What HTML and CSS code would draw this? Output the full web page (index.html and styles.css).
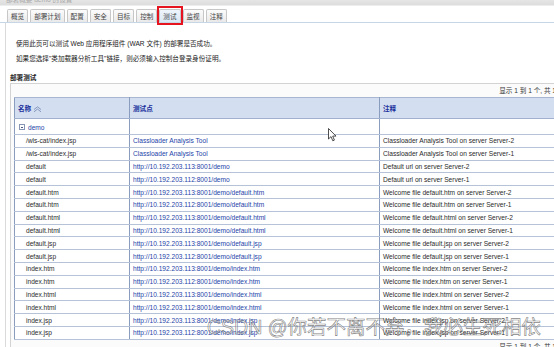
FILE: index.html
```html
<!DOCTYPE html>
<html lang="zh-CN">
  <head>
    <meta charset="UTF-8" />
    <title>部署测试</title>
    <link rel="stylesheet" href="styles.css">
  </head>
  <body>
    <div class="topbar"><span>部署概要 demo 的设置</span></div>
    <div class="tabs">
      <span class="tab">概览</span>
      <span class="tab">部署计划</span>
      <span class="tab">配置</span>
      <span class="tab">安全</span>
      <span class="tab">目标</span>
      <span class="tab">控制</span>
      <span class="tab active">测试</span>
      <span class="tab">监视</span>
      <span class="tab">注释</span>
    </div>
    <div class="page">
      <p class="intro">使用此页可以测试 Web 应用程序组件 (WAR 文件) 的部署是否成功。</p>
      <p class="intro">如果您选择"类加载器分析工具"链接，则必须输入控制台登录身份证明。</p>
      <h3 class="section-title">部署测试</h3>
      <div class="panel">
        <div class="pager">显示 1 到 1 个, 共 1</div>
        <table class="grid">
          <colgroup>
            <col class="c-name" />
            <col class="c-point" />
            <col class="c-note" />
          </colgroup>
          <thead>
            <tr>
              <th>名称 <svg class="sort" width="9" height="6" viewBox="0 0 9 6"><path d="M1 3.5 L4.5 0.8 L8 3.5 M1 5.8 L4.5 3.1 L8 5.8" fill="none" stroke="#7d8fb8" stroke-width="0.9"/></svg></th>
              <th>测试点</th>
              <th>注释</th>
            </tr>
          </thead>
          <tbody>
            <tr class="group">
              <td><span class="toggle"></span><a>demo</a></td>
              <td></td>
              <td></td>
            </tr>
            <tr><td class="name">/wls-cat/index.jsp</td><td><a>Classloader Analysis Tool</a></td><td>Classloader Analysis Tool on server Server-2</td></tr>
            <tr><td class="name">/wls-cat/index.jsp</td><td><a>Classloader Analysis Tool</a></td><td>Classloader Analysis Tool on server Server-1</td></tr>
            <tr><td class="name">default</td><td><a>http://10.192.203.113:8001/demo</a></td><td>Default url on server Server-2</td></tr>
            <tr><td class="name">default</td><td><a>http://10.192.203.112:8001/demo</a></td><td>Default url on server Server-1</td></tr>
            <tr><td class="name">default.htm</td><td><a>http://10.192.203.113:8001/demo/default.htm</a></td><td>Welcome file default.htm on server Server-2</td></tr>
            <tr><td class="name">default.htm</td><td><a>http://10.192.203.112:8001/demo/default.htm</a></td><td>Welcome file default.htm on server Server-1</td></tr>
            <tr><td class="name">default.html</td><td><a>http://10.192.203.113:8001/demo/default.html</a></td><td>Welcome file default.html on server Server-2</td></tr>
            <tr><td class="name">default.html</td><td><a>http://10.192.203.112:8001/demo/default.html</a></td><td>Welcome file default.html on server Server-1</td></tr>
            <tr><td class="name">default.jsp</td><td><a>http://10.192.203.113:8001/demo/default.jsp</a></td><td>Welcome file default.jsp on server Server-2</td></tr>
            <tr><td class="name">default.jsp</td><td><a>http://10.192.203.112:8001/demo/default.jsp</a></td><td>Welcome file default.jsp on server Server-1</td></tr>
            <tr><td class="name">index.htm</td><td><a>http://10.192.203.113:8001/demo/index.htm</a></td><td>Welcome file index.htm on server Server-2</td></tr>
            <tr><td class="name">index.htm</td><td><a>http://10.192.203.112:8001/demo/index.htm</a></td><td>Welcome file index.htm on server Server-1</td></tr>
            <tr><td class="name">index.html</td><td><a>http://10.192.203.113:8001/demo/index.html</a></td><td>Welcome file index.html on server Server-2</td></tr>
            <tr><td class="name">index.html</td><td><a>http://10.192.203.112:8001/demo/index.html</a></td><td>Welcome file index.html on server Server-1</td></tr>
            <tr><td class="name">index.jsp</td><td><a>http://10.192.203.113:8001/demo/index.jsp</a></td><td>Welcome file index.jsp on server Server-2</td></tr>
            <tr><td class="name">index.jsp</td><td><a>http://10.192.203.112:8001/demo/index.jsp</a></td><td>Welcome file index.jsp on server Server-1</td></tr>
          </tbody>
        </table>
        <div class="pager">显示 1 到 1 个, 共 1</div>
      </div>
    </div>
    <div class="watermark">CSDN @你若不离不弃，我必生死相依</div>
    <svg class="cursor" width="9" height="14" viewBox="0 0 9 14">
      <path d="M0.5 0.5 L0.5 11 L3 8.6 L4.8 12.8 L6.4 12.1 L4.7 8.1 L8 8.1 Z" fill="#fff" stroke="#222" stroke-width="0.8" stroke-linejoin="round"/>
    </svg>
  </body>
</html>
```
FILE: styles.css
```css
* {
  padding: 0;
  margin: 0;
  box-sizing: border-box;
}
html {
  overflow: hidden;
}
body {
  width: 620px;
  height: 347px;
  position: relative;
  overflow: hidden;
  background: #fff;
  color: #333;
  font-family: 'Liberation Sans', 'Noto Sans CJK SC', sans-serif;
  font-size: 6.6px;
}
.topbar {
  height: 6px;
  overflow: hidden;
  background: linear-gradient(#e4e5e4, #dcdddc);
  border-bottom: 1px solid #eceeed;
  padding-left: 6px;
}
.topbar span {
  display: block;
  margin-top: -5px;
  line-height: 9px;
  color: #a8a8a8;
}
.tabs {
  display: flex;
  gap: 2px;
  padding: 3px 0 0 7px;
  border-bottom: 1px solid #c6d6e6;
}
.tab {
  position: relative;
  height: 13px;
  line-height: 13px;
  padding: 0 3px;
  background: linear-gradient(#fbfbfb, #e9e9e9);
  border: 1px solid #c7c7c7;
  border-bottom: none;
  border-radius: 2px 2px 0 0;
  color: #444;
}
.tab.active {
  background: linear-gradient(#eef5fc, #d9e7f4);
}
.tab.active::after {
  content: '';
  position: absolute;
  left: -3px;
  right: -3px;
  top: -4px;
  bottom: -3px;
  border: 2px solid #e6141e;
}
.page {
  border-left: 1px solid #dadada;
  margin-left: 5px;
  padding: 13px 0 0 4px;
  height: 330px;
}
.intro {
  line-height: 15px;
  padding-left: 6px;
  color: #222;
}
.section-title {
  margin-top: 7px;
  font-size: 6.6px;
  line-height: 10px;
  color: #222;
}
.panel {
  width: 548px;
  border: 1px solid #d3d3d3;
  background: #fbfbfb;
  padding: 0 0 0 3px;
}
.pager {
  line-height: 13px;
  text-align: right;
  padding-right: 1px;
  color: #333;
}
.grid {
  width: 542px;
  border-collapse: collapse;
  table-layout: fixed;
  background: #fff;
  border-left: 1px solid #8b9dbf;
}
.c-name {
  width: 115px;
}
.c-point {
  width: 250px;
}
.grid th {
  height: 21px;
  background: #d3dff0;
  color: #1b2f9c;
  text-align: left;
  padding-left: 3px;
  border-top: 1px solid #a7b7d2;
  border-bottom: 1px solid #9fb1cf;
  border-right: 1px solid #8b9dbf;
}
.grid th .sort {
  vertical-align: -0.5px;
}
.grid td {
  height: 12.8px;
  padding: 0 0 0 3px;
  border-bottom: 1px solid #b5c2d8;
  border-right: 1px solid #8b9dbf;
  white-space: nowrap;
  overflow: hidden;
  color: #2a2a2a;
}
.grid tr.group td {
  height: 16px;
  padding-top: 1px;
}
.grid td.name {
  padding-left: 11px;
}
.grid a {
  color: #1d44a8;
}
.toggle {
  display: inline-block;
  position: relative;
  width: 6px;
  height: 6px;
  border: 1px solid #8696b4;
  margin: 0 3px 0 1px;
  vertical-align: -0.5px;
  background: #fff;
}
.toggle::after {
  content: '';
  position: absolute;
  left: 1px;
  right: 1px;
  top: 1.5px;
  height: 1px;
  background: #4a5a80;
}
.watermark {
  position: absolute;
  left: 207px;
  top: 315px;
  font-size: 19.5px;
  line-height: 24px;
  white-space: nowrap;
  color: rgba(255, 255, 255, 0.35);
  -webkit-text-stroke: 0.6px rgba(95, 95, 95, 0.8);
}
.cursor {
  position: absolute;
  left: 328px;
  top: 128px;
}
```
